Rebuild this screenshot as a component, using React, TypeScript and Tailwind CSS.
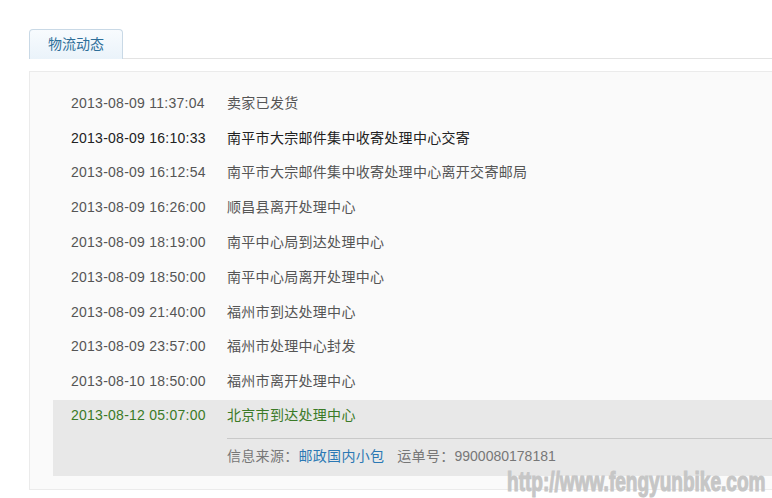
const rows = [
  { time: '2013-08-09 11:37:04', text: '卖家已发货' },
  { time: '2013-08-09 16:10:33', text: '南平市大宗邮件集中收寄处理中心交寄', dark: true },
  { time: '2013-08-09 16:12:54', text: '南平市大宗邮件集中收寄处理中心离开交寄邮局' },
  { time: '2013-08-09 16:26:00', text: '顺昌县离开处理中心' },
  { time: '2013-08-09 18:19:00', text: '南平中心局到达处理中心' },
  { time: '2013-08-09 18:50:00', text: '南平中心局离开处理中心' },
  { time: '2013-08-09 21:40:00', text: '福州市到达处理中心' },
  { time: '2013-08-09 23:57:00', text: '福州市处理中心封发' },
  { time: '2013-08-10 18:50:00', text: '福州市离开处理中心' },
];

const font = { fontFamily: '"Liberation Sans", "Noto Sans CJK SC", sans-serif' };

export default function App() {
  return (
    <div className="relative w-[772px] h-[498px] overflow-hidden bg-white text-[14px]" style={font}>
      {/* 标签页 */}
      <div className="flex items-end pt-[29px] pl-[29px]">
        <div className="w-[94px] h-[30px] rounded-t-[4px] border border-b-0 border-[#c9d9e6] bg-gradient-to-b from-[#f8fbfe] to-[#eaf3fa] flex items-center justify-center text-[#2d6e99]">
          物流动态
        </div>
        <div className="flex-1 border-b border-[#e3e3e3]" />
      </div>

      {/* 物流列表 */}
      <div className="mt-[12px] ml-[29px] w-[800px] h-[419px] border border-[#ebebeb] bg-[#fafafa] pt-[14px] pl-[23px]">
        {rows.map((r) => (
          <div key={r.time} className={`flex items-center h-[34.8px] pl-[18px] ${r.dark ? 'text-[#222]' : 'text-[#555]'}`}>
            <span className="w-[156px] tracking-[0.25px]">{r.time}</span>
            <span className="tracking-[0.3px]">{r.text}</span>
          </div>
        ))}
        <div className="mt-[1px] h-[76px] bg-[#e8e8e8] pl-[18px]">
          <div className="flex items-center h-[30px] text-[#3b7a27]">
            <span className="w-[156px] tracking-[0.25px]">2013-08-12 05:07:00</span>
            <span className="tracking-[0.3px]">北京市到达处理中心</span>
          </div>
          <div className="ml-[156px] mt-[8px] border-t border-[#c9c9c9] pt-[8px] h-[28px] flex items-center text-[#777]">
            <span className="tracking-[0.3px]">信息来源：</span>
            <span className="tracking-[0.3px] text-[#2b78b4]">邮政国内小包</span>
            <span className="ml-[13px] tracking-[0.3px]">运单号：</span>
            <span>9900080178181</span>
          </div>
        </div>
      </div>

      {/* 水印 */}
      <div
        className="absolute left-[507px] top-[468px] text-[28px] font-bold text-[#c6c6c6] leading-none origin-left scale-x-[0.68] whitespace-nowrap [-webkit-text-stroke:1.2px_#c6c6c6]"
        style={{ fontFamily: '"Liberation Sans", sans-serif' }}
      >
        http://www.fengyunbike.com
      </div>
    </div>
  );
}
